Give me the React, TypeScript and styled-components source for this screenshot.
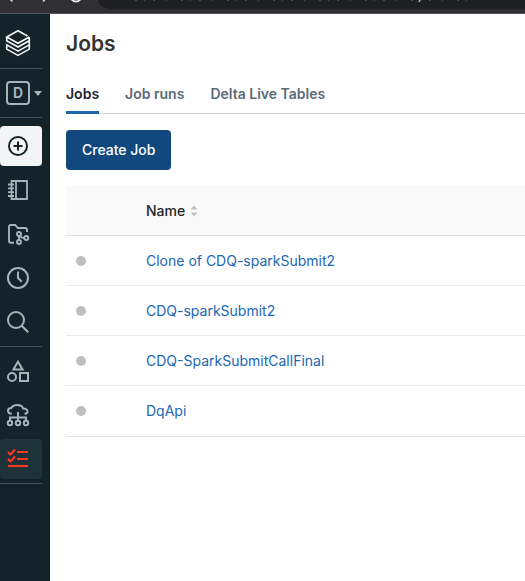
import React from "react";
import styled, { createGlobalStyle } from "styled-components";

const GlobalStyle = createGlobalStyle`
  *, *::before, *::after { box-sizing: border-box; }
  body {
    margin: 0;
    background: #ffffff;
    font-family: Inter, "Liberation Sans", sans-serif;
    font-size: 14px;
    line-height: 20px;
    color: #1f272d;
  }
`;

const Page = styled.div`
  display: flex;
  flex-direction: column;
  min-height: 100vh;
`;

const BrowserBar = styled.header`
  display: flex;
  height: 14px;
  background: #302f34;
  border-bottom: 1px solid #555559;
`;

const BrowserButtons = styled.svg`
  flex: none;
  width: 98px;
  height: 9px;
`;

const AddressBar = styled.div`
  flex: 1;
  height: 9px;
  overflow: hidden;
  background: #1e1f23;
  border-bottom-left-radius: 12px 9px;
`;

const AddressText = styled.svg`
  display: block;
`;

const Body = styled.div`
  display: flex;
  flex: 1;
`;

const Sidebar = styled.nav`
  flex: none;
  width: 50px;
  padding-right: 8px;
  background: #14232a;
`;

const Brand = styled.a`
  display: flex;
  height: 54px;
  padding: 15px 0 0 5px;
`;

const Divider = styled.hr`
  height: 1px;
  margin: 0;
  border: 0;
  background: #46535a;
`;

const PersonaButton = styled.button`
  display: flex;
  align-items: center;
  gap: 4px;
  width: 100%;
  height: 48px;
  padding: 0 0 0 6px;
  border: 0;
  background: none;
  color: #a3b4bd;
`;

const PersonaLetter = styled.span`
  display: flex;
  align-items: center;
  justify-content: center;
  width: 24px;
  height: 24px;
  border: 2px solid #a3b4bd;
  border-radius: 4px;
  font: 700 14px/20px Inter, "Liberation Sans", sans-serif;
`;

const NavGroup = styled.div<{ $first?: boolean }>`
  display: flex;
  flex-direction: column;
  gap: 4px;
  padding: ${(p) => (p.$first ? "8px" : "4px")} 0 4px;
`;

const tones = {
  plain: { bg: "transparent", fg: "#a3b4bd" },
  create: { bg: "#f2f4f5", fg: "#14232a" },
  active: { bg: "#1f323a", fg: "#ff3621" },
};

const NavButton = styled.button<{ $tone: keyof typeof tones }>`
  display: flex;
  align-items: center;
  height: 40px;
  padding: 0 0 0 6px;
  border: 0;
  border-radius: 4px;
  background: ${(p) => tones[p.$tone].bg};
  color: ${(p) => tones[p.$tone].fg};
`;

const Main = styled.main`
  flex: 1;
  min-width: 0;
  padding: 16px 0 0 16px;
`;

const Title = styled.h1`
  margin: 0;
  font-size: 21px;
  line-height: 28px;
  font-weight: 600;
  color: #333333;
`;

const Tabs = styled.div`
  display: flex;
  gap: 26px;
  margin-top: 26px;
  border-bottom: 1px solid #c8d2d9;
`;

const Tab = styled.button<{ $active?: boolean }>`
  height: 30px;
  margin-bottom: -1px;
  padding: 0 0 7px;
  border: 0;
  border-bottom: 3px solid ${(p) => (p.$active ? "#2067ab" : "transparent")};
  background: none;
  font: 600 14px/20px Inter, "Liberation Sans", sans-serif;
  color: ${(p) => (p.$active ? "#1b232b" : "#5b6b77")};
  white-space: nowrap;
`;

const CreateButton = styled.button`
  display: block;
  height: 40px;
  margin: 16px 0;
  padding: 0 16px;
  border: 0;
  border-radius: 4px;
  background: #11497f;
  color: #ffffff;
  font: 500 14px/20px Inter, "Liberation Sans", sans-serif;
`;

const Table = styled.table`
  width: 100%;
  border-collapse: separate;
  border-spacing: 0;
  border-bottom: 1px solid #e4e4e4;
`;

const HeadCell = styled.th<{ $status?: boolean }>`
  width: ${(p) => (p.$status ? "80px" : "auto")};
  height: 50px;
  padding: 0;
  border-bottom: 1px solid #e2e2e2;
  background: #f9f9f9;
  font-weight: 500;
  text-align: left;
`;

const SortButton = styled.button`
  display: flex;
  align-items: center;
  gap: 5px;
  padding: 0;
  border: 0;
  background: none;
  color: #262626;
  font: 500 14px/20px Inter, "Liberation Sans", sans-serif;
`;

const Cell = styled.td`
  height: 50px;
  padding: 0;
  border-bottom: 1px solid #ebebeb;
  tr:last-child > & { border-bottom-color: transparent; }
`;

const StatusDot = styled.span`
  display: block;
  width: 10px;
  height: 10px;
  margin-left: 10px;
  border-radius: 50%;
  background: #bfbfbf;
`;

const JobLink = styled.a`
  color: #2067b3;
  text-decoration: none;
  white-space: nowrap;
`;

const Icon = ({ children }: { children: React.ReactNode }) => (
  <svg width="24" height="24" viewBox="0 0 24 24" fill="none" stroke="currentColor" strokeWidth="2" aria-hidden="true">
    {children}
  </svg>
);

const icons = {
  create: (
    <Icon>
      <circle cx="12" cy="12" r="9" />
      <path d="M12 7.5v9M7.5 12h9" />
    </Icon>
  ),
  notebook: (
    <Icon>
      <path d="M5.500 3H21v18H5.500zM10 3v18M2 6.500h6M2 10.300h6M2 14.100h6M2 18h6" strokeWidth="1.8" />
    </Icon>
  ),
  repos: (
    <Icon>
      <g strokeWidth="1.9">
        <path d="M8 20.8H5a2 2 0 0 1-2-2V5a2 2 0 0 1 2-2h4.2l2.6 3H19a2 2 0 0 1 2 2v2" />
        <circle cx="13" cy="12" r="2" />
        <circle cx="13" cy="20" r="2" />
        <circle cx="20.3" cy="16" r="2" />
        <path d="M13 14v4M14 13.700l1.400 1.600q.5.700 3 .7" />
      </g>
    </Icon>
  ),
  recents: (
    <Icon>
      <circle cx="12" cy="12" r="10" />
      <path d="M12 5.5V12l3.8 3.8" />
    </Icon>
  ),
  search: (
    <Icon>
      <circle cx="10" cy="10" r="8" />
      <path d="M15.7 15.7l6.5 6.5" />
    </Icon>
  ),
  data: (
    <Icon>
      <path d="M12 2.8l4.6 7.7H7.4zM14 14h8v8h-8z" />
      <circle cx="6" cy="18" r="4" />
    </Icon>
  ),
  compute: (
    <Icon>
      <path d="M5.8 10.8C3.5 10.7 2 9.5 2 7.8c0-1.500 1.300-2.800 3.200-2.800C6.200 3.200 8.500 2 11.300 2c3 0 5.300 1.400 5.900 3.500 2.500-.1 4.300 1.200 4.300 2.900 0 1.400-1.200 2.400-3 2.400" />
      <path d="M12 9v9M4 18v-3.500h16V18" />
      <circle cx="4" cy="20" r="2.200" />
      <circle cx="12" cy="20" r="2.200" />
      <circle cx="20" cy="20" r="2.200" />
    </Icon>
  ),
  jobs: (
    <Icon>
      <path d="M11 5h11M11 12h11M2 19h20M2 5l2.500 2.500L9 2.500M2 12l2.500 2.500L9 9.500" />
    </Icon>
  ),
};

type NavEntry = { icon: keyof typeof icons; label: string; tone?: keyof typeof tones };

const primaryNav: NavEntry[] = [
  { icon: "create", label: "Create", tone: "create" },
  { icon: "notebook", label: "Workspace" },
  { icon: "repos", label: "Repos" },
  { icon: "recents", label: "Recents" },
  { icon: "search", label: "Search" },
];

const secondaryNav: NavEntry[] = [
  { icon: "data", label: "Data" },
  { icon: "compute", label: "Compute" },
  { icon: "jobs", label: "Jobs", tone: "active" },
];

const jobs = ["Clone of CDQ-sparkSubmit2", "CDQ-sparkSubmit2", "CDQ-SparkSubmitCallFinal", "DqApi"];

const NavItems = ({ items }: { items: NavEntry[] }) => (
  <>
    {items.map((item) => (
      <NavButton key={item.label} $tone={item.tone ?? "plain"} aria-label={item.label}>
        {icons[item.icon]}
      </NavButton>
    ))}
  </>
);

export default function App() {
  return (
    <Page>
      <GlobalStyle />
      <BrowserBar>
        <BrowserButtons viewBox="0 0 98 9" aria-hidden="true">
          <path d="M10 -1l2.500 2.500M43 1.500l2.500-2.500" stroke="#d6d7da" strokeWidth="1.600" />
          <circle cx="76" cy="-4" r="5.500" fill="none" stroke="#e8eaed" strokeWidth="2" />
        </BrowserButtons>
        <AddressBar>
          <AddressText width="427" height="9" viewBox="0 0 427 9" aria-hidden="true">
            <path d="M37 .5H375" stroke="#4b4c50" strokeDasharray="2 7 1 8 2 11 1 14" />
            <path d="M322 0l-1 2" stroke="#b5b6b9" strokeWidth="1.500" />
          </AddressText>
        </AddressBar>
      </BrowserBar>
      <Body>
        <Sidebar aria-label="Workspace navigation">
          <Brand href="#" aria-label="Home">
            <svg width="26" height="28" viewBox="0 0 26 28" fill="none" stroke="#f2f4f5" strokeWidth="1.600" aria-hidden="true">
              <path d="M24.300 8L13 14.300 1.700 8 13 1.700l9.500 5.300M1.700 8v3.700L13 18l11.300-6.300v4.200L13 22.200 1.700 15.900v4.200L13 26.400l11.300-6.300v-4.200M24.300 8v3.700" />
            </svg>
          </Brand>
          <Divider />
          <PersonaButton aria-label="Data Science and Engineering">
            <PersonaLetter>D</PersonaLetter>
            <svg width="8" height="5" viewBox="0 0 8 5" aria-hidden="true">
              <path d="M0 0h8L4 5z" fill="currentColor" />
            </svg>
          </PersonaButton>
          <Divider />
          <NavGroup $first>
            <NavItems items={primaryNav} />
          </NavGroup>
          <Divider />
          <NavGroup>
            <NavItems items={secondaryNav} />
          </NavGroup>
          <Divider />
        </Sidebar>
        <Main>
          <Title>Jobs</Title>
          <Tabs role="tablist">
            <Tab role="tab" aria-selected="true" $active>Jobs</Tab>
            <Tab role="tab" aria-selected="false">Job runs</Tab>
            <Tab role="tab" aria-selected="false">Delta Live Tables</Tab>
          </Tabs>
          <CreateButton>Create Job</CreateButton>
          <Table>
            <thead>
              <tr>
                <HeadCell $status aria-label="Status" />
                <HeadCell>
                  <SortButton>
                    Name
                    <svg width="8" height="12" viewBox="0 0 8 12" fill="#bfbfbf" aria-hidden="true">
                      <path d="M4 .5L7.500 4.500h-7zM4 11.500L.5 7.500h7z" />
                    </svg>
                  </SortButton>
                </HeadCell>
              </tr>
            </thead>
            <tbody>
              {jobs.map((name) => (
                <tr key={name}>
                  <Cell><StatusDot /></Cell>
                  <Cell><JobLink href="#">{name}</JobLink></Cell>
                </tr>
              ))}
            </tbody>
          </Table>
        </Main>
      </Body>
    </Page>
  );
}
